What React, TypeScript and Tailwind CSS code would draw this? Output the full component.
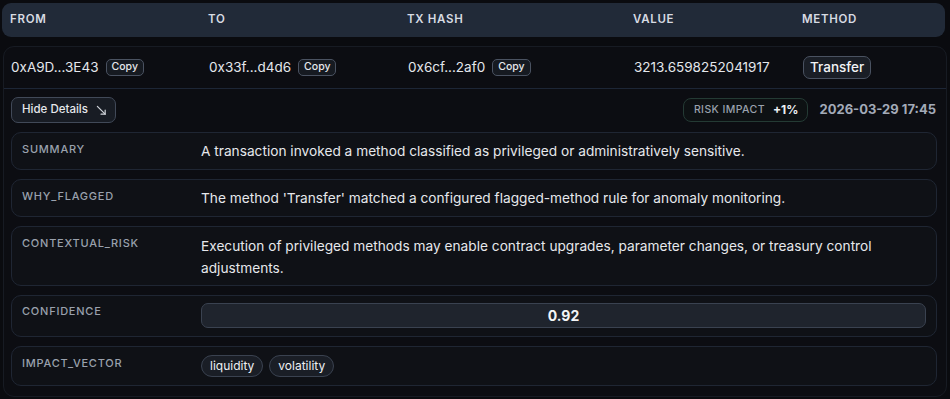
import React from "react";

const cols = "grid grid-cols-[198px_199px_226px_169px_1fr] items-center";

function CopyBtn() {
  return (
    <button className="ml-[7px] h-[17px] px-[5px] rounded-[5px] border border-[#4a5261] bg-[#161a21] text-[10.5px] font-medium leading-none text-[#e5e7eb]">
      Copy
    </button>
  );
}

function Panel({ label, children, className = "py-[8px]" }: { label: string; children: React.ReactNode; className?: string }) {
  return (
    <div className={`grid grid-cols-[179px_1fr] rounded-[10px] border border-[#1f2633] bg-[#0f1116] pl-[10px] pr-[10px] ${className}`}>
      <div className="text-[11px] leading-[16px] font-medium tracking-[0.07em] text-[#9aa1ad]">{label}</div>
      <div>{children}</div>
    </div>
  );
}

export default function App() {
  return (
    <main
      className="min-h-screen w-[950px] h-[399px] overflow-hidden bg-[#0a0b0f] pt-[3px]"
      style={{ fontFamily: "Inter, 'Liberation Sans', sans-serif" }}
    >
      {/* Table header */}
      <div className={`${cols} ml-[2px] w-[943px] h-[34px] rounded-[9px] bg-[#212a38] pl-2 text-[11.5px] font-semibold tracking-[0.06em] text-[#d7dbe2]`}>
        <span>FROM</span>
        <span>TO</span>
        <span>TX HASH</span>
        <span>VALUE</span>
        <span>METHOD</span>
      </div>

      {/* Row card */}
      <div className="mt-[9px] ml-[3px] w-[944px] h-[351px] rounded-[11px] border border-[#171b23] bg-[#0c0d12]">
        <div className={`${cols} h-[42px] pl-[7px] border-b border-[#1d2636] text-[13.5px] text-[#e4e7ec]`}>
          <div className="flex items-center">0xA9D...3E43<CopyBtn /></div>
          <div className="flex items-center">0x33f...d4d6<CopyBtn /></div>
          <div className="flex items-center">0x6cf...2af0<CopyBtn /></div>
          <div>3213.6598252041917</div>
          <div>
            <span className="inline-flex h-[23px] items-center rounded-[7px] border border-[#4a5261] bg-[#1a1e26] px-[6px] text-[13.5px] font-medium text-[#f3f4f6]">
              Transfer
            </span>
          </div>
        </div>

        <div className="flex items-center justify-between pl-[7px] pr-[10px] pt-[8px] pb-[9px]">
          <button className="flex h-[26px] items-center gap-[8px] rounded-[7px] border border-[#414958] bg-[#181c24] pl-[10px] pr-[8px] text-[11.5px] font-medium text-[#e5e7eb]">
            Hide Details
            <svg width="11" height="11" viewBox="0 0 12 12" fill="none" stroke="#d1d5db" strokeWidth="1.3" strokeLinecap="round">
              <path d="M1.5 1.5 L10 10" />
              <path d="M10 5.5 L10 10 L5.5 10" />
            </svg>
          </button>
          <div className="flex items-center gap-[11px]">
            <div className="flex h-[24px] items-center gap-[8px] rounded-[8px] border border-[#243a34] bg-[#0d1113] pl-[10px] pr-[9px]">
              <span className="text-[10.5px] font-medium tracking-[0.04em] text-[#9aa1ad]">RISK IMPACT</span>
              <span className="text-[12px] font-bold text-[#eef0f3]">+1%</span>
            </div>
            <span className="text-[13px] font-bold text-[#a3aab8]">2026-03-29 17:45</span>
          </div>
        </div>

        <div className="flex flex-col gap-[9px] pl-[7px] pr-[9px] text-[13.7px] text-[#e6e8ec]">
          <Panel label="SUMMARY">
            <p className="leading-[20px]">A transaction invoked a method classified as privileged or administratively sensitive.</p>
          </Panel>
          <Panel label="WHY_FLAGGED">
            <p className="leading-[20px]">The method 'Transfer' matched a configured flagged-method rule for anomaly monitoring.</p>
          </Panel>
          <Panel label="CONTEXTUAL_RISK" className="pt-[8px] pb-[6px]">
            <p className="leading-[22px] max-w-[680px]">
              Execution of privileged methods may enable contract upgrades, parameter changes, or treasury control adjustments.
            </p>
          </Panel>
          <Panel label="CONFIDENCE" className="pt-[7px] pb-[8px]">
            <div className="flex h-[25px] items-center justify-center rounded-[7px] border border-[#3a4250] bg-[#1f242d] text-[14px] font-bold text-[#f3f4f6]">
              0.92
            </div>
          </Panel>
          <Panel label="IMPACT_VECTOR">
            <div className="flex gap-[6px]">
              <span className="inline-flex h-[22px] items-center rounded-full border border-[#3a4250] bg-[#1a1e26] px-[8px] text-[12px] text-[#eef0f3]">liquidity</span>
              <span className="inline-flex h-[22px] items-center rounded-full border border-[#3a4250] bg-[#1a1e26] px-[8px] text-[12px] text-[#eef0f3]">volatility</span>
            </div>
          </Panel>
        </div>
      </div>
    </main>
  );
}
